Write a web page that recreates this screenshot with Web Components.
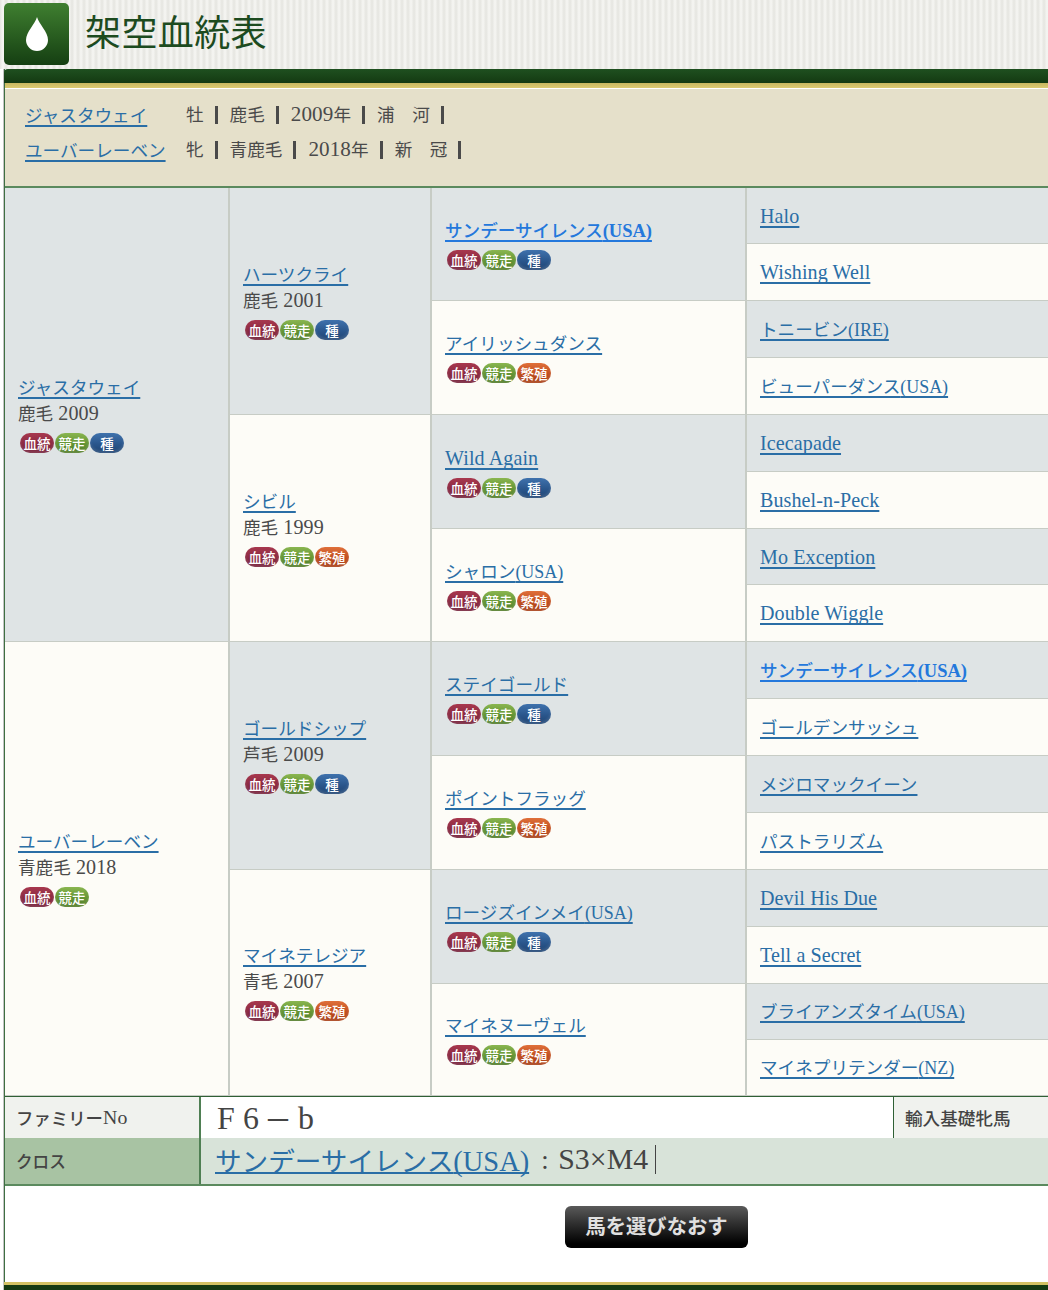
<!DOCTYPE html>
<html lang="ja">
<head>
<meta charset="utf-8">
<title>架空血統表</title>
<style>
html,body{margin:0;padding:0;background:#fff;}
body{font-family:"Liberation Serif","Noto Sans CJK JP",serif;color:#444;}
</style>
</head>
<body>
<site-header></site-header>
<pedigree-panel>
  <info-row name="ジャスタウェイ" fields="牡|鹿毛|2009年|浦　河"></info-row>
  <info-row name="ユーバーレーベン" fields="牝|青鹿毛|2018年|新　冠"></info-row>
  <ped-grid slot="grid"></ped-grid>
  <summary-table slot="summary"></summary-table>
  <back-button slot="action">馬を選びなおす</back-button>
</pedigree-panel>
<script>
// latin runs are set a bit larger, the cjk fallback is wider than the serif
function mixed(text){
  return text.replace(/[\u0020-\u007e]+/g, m => /^\(/.test(m) ? `<span class="lat par">${m}</span>` : `<span class="lat">${m}</span>`);
}
const LAT_CSS = `.lat{font-size:1.14em;letter-spacing:.1px;}.par{font-size:1.02em;letter-spacing:0;}`;
const LINK_CSS = `text-decoration:underline;text-decoration-thickness:2px;text-underline-offset:3px;text-decoration-skip-ink:none;`;

class SiteHeader extends HTMLElement{
  constructor(){
    super();
    this.attachShadow({mode:'open'}).innerHTML = `
    <style>
    :host{display:flex;align-items:flex-start;height:69px;gap:16px;padding-left:4px;box-sizing:border-box;
      background:repeating-linear-gradient(90deg,#e5e5e0 0,#f6f6f3 3px,#e5e5e0 6px);}
    .logo{width:65px;height:62px;margin-top:3px;border-radius:5px;flex:none;display:flex;align-items:center;justify-content:center;
      background:linear-gradient(#3f7f30,#153f12);}
    h1{margin:7px 0 0;font:400 36px/46px "Noto Sans CJK JP",sans-serif;letter-spacing:.4px;color:#1d4b1f;}
    </style>
    <div class="logo"><svg width="22" height="34" viewBox="0 0 22 34"><path d="M11 0C13 7 22 15 22 23A11 11 0 0 1 0 23C0 15 9 7 11 0Z" fill="#fff"/></svg></div>
    <h1>架空血統表</h1>`;
  }
}

class PedigreePanel extends HTMLElement{
  constructor(){
    super();
    this.attachShadow({mode:'open'}).innerHTML = `
    <style>
    :host{display:block;margin-left:3px;border-left:1px solid #c4c4c4;}
    .frame{border-left:1px solid #3e6f42;background:#fff;}
    .bar{height:14px;background:linear-gradient(#1f5020,#143a12);border-radius:4px 0 0 0;margin-left:-1px;}
    .gold{height:5px;background:linear-gradient(#c8b760,#dccb72);margin-bottom:1px;}
    .info{background:#e5e0ca;padding:11px 0 0 20px;box-sizing:border-box;border-bottom:2px solid #5b8a5e;display:flex;flex-direction:column;gap:6px;height:99px;}
    .act{height:96px;display:flex;justify-content:flex-start;padding:20px 0 0 560px;box-sizing:border-box;}
    .foot{height:8px;background:linear-gradient(#d3c163 0,#d3c163 3.5px,#153a12 3.5px);margin-left:-1px;}
    </style>
    <div class="frame">
      <div class="bar"></div><div class="gold"></div>
      <div class="info"><slot></slot></div>
      <slot name="grid"></slot>
      <slot name="summary"></slot>
      <div class="act"><slot name="action"></slot></div>
      <div class="foot"></div>
    </div>`;
  }
}

class InfoRow extends HTMLElement{
  connectedCallback(){
    const fields = this.getAttribute('fields').split('|');
    this.attachShadow({mode:'open'}).innerHTML = `
    <style>
    :host{display:flex;align-items:center;height:29px;font-size:17.6px;color:#4a4a4a;}
    ${LAT_CSS}
    .lat{font-size:1.2em;}
    a{width:161px;flex:none;color:#2a6ea6;text-decoration:none;}
    a span{${LINK_CSS}}
    .f{display:flex;align-items:center;}
    .f b{font-weight:400;padding-right:11px;margin-right:12px;border-right:3px solid #4a4a4a;line-height:18px;height:18px;display:flex;align-items:center;}
    </style>
    <a href="#"><span>${this.getAttribute('name')}</span></a>
    <div class="f">${fields.map(f => `<b><span>${mixed(f)}</span></b>`).join('')}</div>`;
  }
}

class PedBadge extends HTMLElement{
  constructor(){
    super();
    this.attachShadow({mode:'open'}).innerHTML = `
    <style>
    :host{display:inline-flex;align-items:center;justify-content:center;width:34px;height:20px;border-radius:10px;
      font:500 13.5px/20px "Noto Sans CJK JP",sans-serif;color:#fff;overflow:hidden;box-shadow:inset 0 -2px 3px rgba(255,255,255,.14);}
    :host([kind=blood]){background:linear-gradient(#a8384e,#8a2a42 55%,#74203a);}
    :host([kind=race]){background:linear-gradient(#8ab650,#649434 55%,#4f7a26);}
    :host([kind=sire]){background:linear-gradient(#3f72ad,#2a568c 55%,#1f4473);}
    :host([kind=dam]){background:linear-gradient(#e0703a,#c04e20 55%,#a63c14);}
    </style><slot></slot>`;
  }
}

class PedCell extends HTMLElement{
  constructor(){
    super();
    this.attachShadow({mode:'open'}).innerHTML = `
    <style>
    :host{display:flex;flex-direction:column;justify-content:center;box-sizing:border-box;padding:3px 0 0 13px;
      border-right:2px solid #c7ccc5;border-bottom:1px solid #c7ccc5;background:#fdfcf7;font-size:17.6px;line-height:25px;min-width:0;}
    :host([tone=dark]){background:#dfe4e5;}
    :host([last]){border-right:0;padding-top:2px;}
    ::slotted([slot=tags]){display:flex;gap:1px;margin:6px 0 3px 2px;}
    </style>
    <div><slot name="name"></slot></div>
    <div><slot name="meta"></slot></div>
    <slot name="tags"></slot>`;
  }
}

const K = {b:['blood','血統'], r:['race','競走'], s:['sire','種'], d:['dam','繁殖']};
// generation, name, coat line, badges, dark row, crossed ancestor
const HORSES = [
  [1,'ジャスタウェイ','鹿毛 2009','brs',1],[1,'ユーバーレーベン','青鹿毛 2018','br',0],
  [2,'ハーツクライ','鹿毛 2001','brs',1],[2,'シビル','鹿毛 1999','brd',0],[2,'ゴールドシップ','芦毛 2009','brs',1],[2,'マイネテレジア','青毛 2007','brd',0],
  [3,'サンデーサイレンス(USA)','','brs',1,1],[3,'アイリッシュダンス','','brd',0],[3,'Wild Again','','brs',1],[3,'シャロン(USA)','','brd',0],
  [3,'ステイゴールド','','brs',1],[3,'ポイントフラッグ','','brd',0],[3,'ロージズインメイ(USA)','','brs',1],[3,'マイネヌーヴェル','','brd',0],
  [4,'Halo','','',1],[4,'Wishing Well','','',0],[4,'トニービン(IRE)','','',1],[4,'ビューパーダンス(USA)','','',0],
  [4,'Icecapade','','',1],[4,'Bushel-n-Peck','','',0],[4,'Mo Exception','','',1],[4,'Double Wiggle','','',0],
  [4,'サンデーサイレンス(USA)','','',1,1],[4,'ゴールデンサッシュ','','',0],[4,'メジロマックイーン','','',1],[4,'パストラリズム','','',0],
  [4,'Devil His Due','','',1],[4,'Tell a Secret','','',0],[4,'ブライアンズタイム(USA)','','',1],[4,'マイネプリテンダー(NZ)','','',0],
];

class PedGrid extends HTMLElement{
  connectedCallback(){
    const root = this.attachShadow({mode:'open'});
    root.innerHTML = `
    <style>
    :host{display:grid;grid-auto-flow:column;grid-template-columns:225px 202px 315px 1fr;
      grid-template-rows:56px 57px 57px 57px 57px 57px 56px 57px 57px 57px 57px 57px 57px 57px 56px 56px;}
    ${LAT_CSS}
    a{color:#2a6ea6;${LINK_CSS}}
    a.cross{color:#2478dc;font-weight:500;}
    a.cross .par{font-weight:700;font-size:1.05em;}
    .meta{color:#4a4a4a;}
    </style>`;
    HORSES.forEach(([gen,name,meta,tags,dark,cross]) => {
      const cell = document.createElement('ped-cell');
      cell.style.gridRow = `span ${[8,4,2,1][gen-1]}`;
      if(dark) cell.setAttribute('tone','dark');
      if(gen == 4) cell.setAttribute('last','');
      let html = `<a slot="name" href="#" class="${cross?'cross':''}">${mixed(name)}</a>`;
      if(meta) html += `<span slot="meta" class="meta">${mixed(meta)}</span>`;
      if(tags) html += `<div slot="tags">${[...tags].map(t => `<ped-badge kind="${K[t][0]}">${K[t][1]}</ped-badge>`).join('')}</div>`;
      cell.innerHTML = html;
      root.appendChild(cell);
    });
  }
}

class SummaryTable extends HTMLElement{
  constructor(){
    super();
    this.attachShadow({mode:'open'}).innerHTML = `
    <style>
    :host{display:grid;grid-template-columns:196px 1fr 155px;grid-template-rows:41px 46px;
      border-top:1px solid #2f6035;border-bottom:2px solid #5b8a5e;font-size:17.6px;color:#444;}
    ${LAT_CSS}
    .lab{display:flex;align-items:center;padding-left:11px;font-weight:500;font-size:17.4px;background:#f0f2ee;border-right:2px solid #4f7f53;}
    .lab.g{background:#a8c3a3;font-size:16.6px;}
    .val{display:flex;align-items:center;padding:2px 0 0 16px;font-size:28px;background:#fff;}
    .val .sp{margin:0 6px 0 5px;}
    .imp{display:flex;align-items:center;padding-left:11px;background:#f0f2ee;border-left:1px solid #2f6035;font-weight:500;}
    .cross{grid-column:2 / 4;background:#d8e3d9;padding:0 0 4px 14px;align-items:center;display:flex;font-size:26.6px;}
    .cross a{color:#2a6ea6;${LINK_CSS}text-underline-offset:1px;}
    .cross a .par{font-size:1.07em;}
    .cross i{font-style:normal;margin-left:12px;border-right:1px solid #444;padding-right:7px;line-height:28px;}
    .cross i b{font-weight:400;margin-right:3px;}
    .cross i .lat{font-size:1.12em;}
    </style>
    <div class="lab">${mixed('ファミリーNo')}</div>
    <div class="val"><span class="lat">F 6</span><span class="sp">－</span><span class="lat">b</span></div>
    <div class="imp">輸入基礎牝馬</div>
    <div class="lab g">クロス</div>
    <div class="cross"><a href="#">${mixed('サンデーサイレンス(USA)')}</a><i><b>:</b>&nbsp;<span class="lat">S3×M4</span></i></div>`;
  }
}

class BackButton extends HTMLElement{
  constructor(){
    super();
    this.attachShadow({mode:'open'}).innerHTML = `
    <style>
    :host{display:flex;align-items:center;justify-content:center;width:183px;height:42px;box-sizing:border-box;padding-bottom:3px;border-radius:6px;
      background:linear-gradient(#5a5a5a,#2c2c2c 45%,#000 90%);color:#e0e0e0;
      font:700 20.3px/39px "Noto Sans CJK JP",sans-serif;cursor:pointer;}
    </style><slot></slot>`;
  }
}

customElements.define('site-header', SiteHeader);
customElements.define('pedigree-panel', PedigreePanel);
customElements.define('info-row', InfoRow);
customElements.define('ped-badge', PedBadge);
customElements.define('ped-cell', PedCell);
customElements.define('ped-grid', PedGrid);
customElements.define('summary-table', SummaryTable);
customElements.define('back-button', BackButton);
</script>
</body>
</html>
